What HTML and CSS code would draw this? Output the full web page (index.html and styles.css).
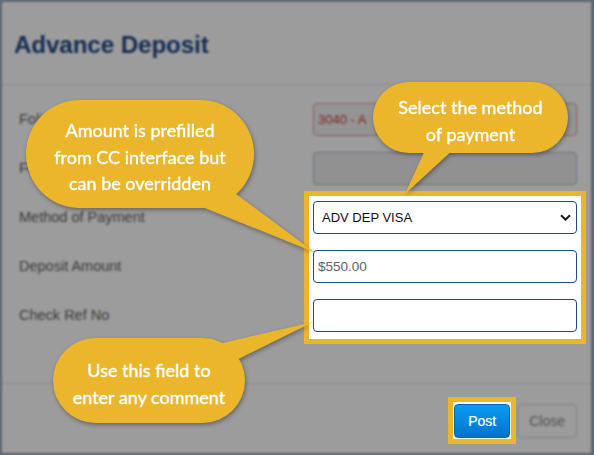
FILE: index.html
```html
<!DOCTYPE html>
<html lang="en">
<head>
<meta charset="utf-8">
<title>Advance Deposit</title>
<link rel="stylesheet" href="styles.css">
</head>
<body>
<div class="modal">
  <header class="modal-header">
    <h1 class="title">Advance Deposit</h1>
  </header>
  <div class="modal-body">
    <div class="labels">
      <div class="label">Folio</div>
      <div class="label">Folio Balance</div>
      <div class="label">Method of Payment</div>
      <div class="label">Deposit Amount</div>
      <div class="label">Check Ref No</div>
    </div>
    <div class="fields">
      <div class="field field-error">3040 - A</div>
      <div class="field field-readonly"></div>
      <div class="field-group">
        <div class="field field-select">
          <span>ADV DEP VISA</span>
          <svg class="chevron" width="11" height="7" viewBox="0 0 11 7"><path d="M1 1.2 L5.5 5.5 L10 1.2" fill="none" stroke="#1a1a1a" stroke-width="2"/></svg>
        </div>
        <input class="field field-input" type="text" value="$550.00">
        <input class="field field-input" type="text" value="">
      </div>
    </div>
  </div>
  <footer class="modal-footer">
    <span class="btn-spot"><button class="btn btn-primary">Post</button></span>
    <button class="btn btn-default">Close</button>
  </footer>
</div>
<div class="dim"></div>
<div class="callouts">
  <svg class="tails" width="594" height="455" viewBox="0 0 594 455">
    <polygon points="213,177 180,198 315,252.5" fill="#ebb62c"/>
    <polygon points="432,135 468,136 405,194" fill="#ebb62c"/>
    <polygon points="202,348 220,368 313,322" fill="#ebb62c"/>
  </svg>
  <div class="bubble bubble-amount">Amount is prefilled<br>from CC interface but<br>can be overridden</div>
  <div class="bubble bubble-method">Select the method<br>of payment</div>
  <div class="bubble bubble-comment">Use this field to<br>enter any comment</div>
</div>
</body>
</html>
```
FILE: styles.css
```css
html, body {
  margin: 0;
  padding: 0;
}
body {
  width: 594px;
  height: 455px;
  overflow: hidden;
  background: #fff;
  font-family: "Liberation Sans", Arial, sans-serif;
}
.modal {
  box-sizing: border-box;
  height: 455px;
  border: 2px solid #94abbb;
  border-right-width: 3px;
  background: #fff;
  display: flex;
  flex-direction: column;
}
.modal-header {
  padding: 29px 12px 25px;
  border-bottom: 1px solid #e3e3e3;
}
.title {
  margin: 0;
  font-size: 24px;
  line-height: 28px;
  font-weight: 700;
  color: #244d88;
}
.modal-body {
  display: flex;
  padding: 18px 14px 51px 17px;
}
.labels {
  width: 294px;
  display: flex;
  flex-direction: column;
  gap: 16px;
}
.label {
  height: 33px;
  display: flex;
  align-items: center;
  font-size: 14.5px;
  color: #666;
  padding-bottom: 2px;
  box-sizing: border-box;
}
.fields {
  flex: 1;
  display: flex;
  flex-direction: column;
  gap: 16px;
}
.field {
  box-sizing: border-box;
  width: 100%;
  height: 33px;
  margin: 0;
  border: 1px solid #1e4a88;
  border-radius: 4px;
  font-family: "Liberation Sans", Arial, sans-serif;
  font-size: 13px;
  display: flex;
  align-items: center;
  padding: 0 4px;
  background: #fff;
}
.field-error {
  background: #f2f2f2;
  border-color: #e59a9a;
  color: #d2423d;
}
.field-readonly {
  background: #eeeeee;
  border-color: #a9b8d2;
}
.field-group {
  position: relative;
  z-index: 2;
  display: flex;
  flex-direction: column;
  gap: 16px;
}
.field-group::before {
  content: "";
  position: absolute;
  top: -10px;
  bottom: -12px;
  left: -9px;
  right: -9px;
  background: #fff;
  border: 5px solid #ebb62c;
  z-index: -1;
}
.field-select {
  justify-content: space-between;
  padding: 0 5px 0 8px;
  color: #111;
}
.chevron {
  display: block;
}
.field-input {
  display: block;
  color: #5f5f5f;
  font-size: 13.5px;
  outline: none;
}
.modal-footer {
  display: flex;
  justify-content: flex-end;
  gap: 7px;
  padding: 20px 14px 15px;
  border-top: 1px solid #e3e3e3;
}
.btn {
  box-sizing: border-box;
  height: 34px;
  margin: 0;
  border-radius: 4px;
  border: 1px solid;
  font-family: "Liberation Sans", Arial, sans-serif;
  font-size: 14px;
  padding: 0 13px;
}
.btn-spot {
  position: relative;
  z-index: 2;
  display: flex;
}
.btn-spot::before {
  content: "";
  position: absolute;
  top: -7px;
  bottom: -6px;
  left: -6px;
  right: -6px;
  background: #fff;
  border: 5px solid #ebb62c;
  z-index: -1;
}
.btn-primary {
  color: #fff;
  background: linear-gradient(#0a9bf3, #0274cb);
  border-color: #0468b8;
  -webkit-text-stroke: 0.2px #fff;
}
.btn-default {
  background: #fff;
  border-color: #d4d4d4;
  color: #8a8a8a;
  padding: 0 11px;
}
.dim {
  position: fixed;
  inset: 0;
  background: rgba(0, 0, 0, 0.39);
  backdrop-filter: blur(0.9px);
  z-index: 1;
}
.callouts {
  position: fixed;
  inset: 0;
  z-index: 3;
  pointer-events: none;
  filter: drop-shadow(1px 2px 2px rgba(0, 0, 0, 0.35));
}
.tails {
  position: absolute;
  left: 0;
  top: 0;
}
.bubble {
  position: absolute;
  box-sizing: border-box;
  display: flex;
  align-items: center;
  justify-content: center;
  text-align: center;
  background: #ebb62c;
  color: #fff;
  font-family: Lato, "Noto Sans", sans-serif;
  font-size: 18px;
  line-height: 27px;
  padding-top: 6px;
  -webkit-text-stroke: 0.35px #fff;
}
.bubble-amount {
  left: 26px;
  top: 100px;
  width: 228px;
  height: 108px;
  border-radius: 54px;
  line-height: 26.5px;
}
.bubble-method {
  left: 373px;
  top: 82px;
  width: 195px;
  height: 71px;
  border-radius: 36px;
}
.bubble-comment {
  left: 53px;
  top: 338px;
  width: 192px;
  height: 85px;
  border-radius: 43px;
}
```
